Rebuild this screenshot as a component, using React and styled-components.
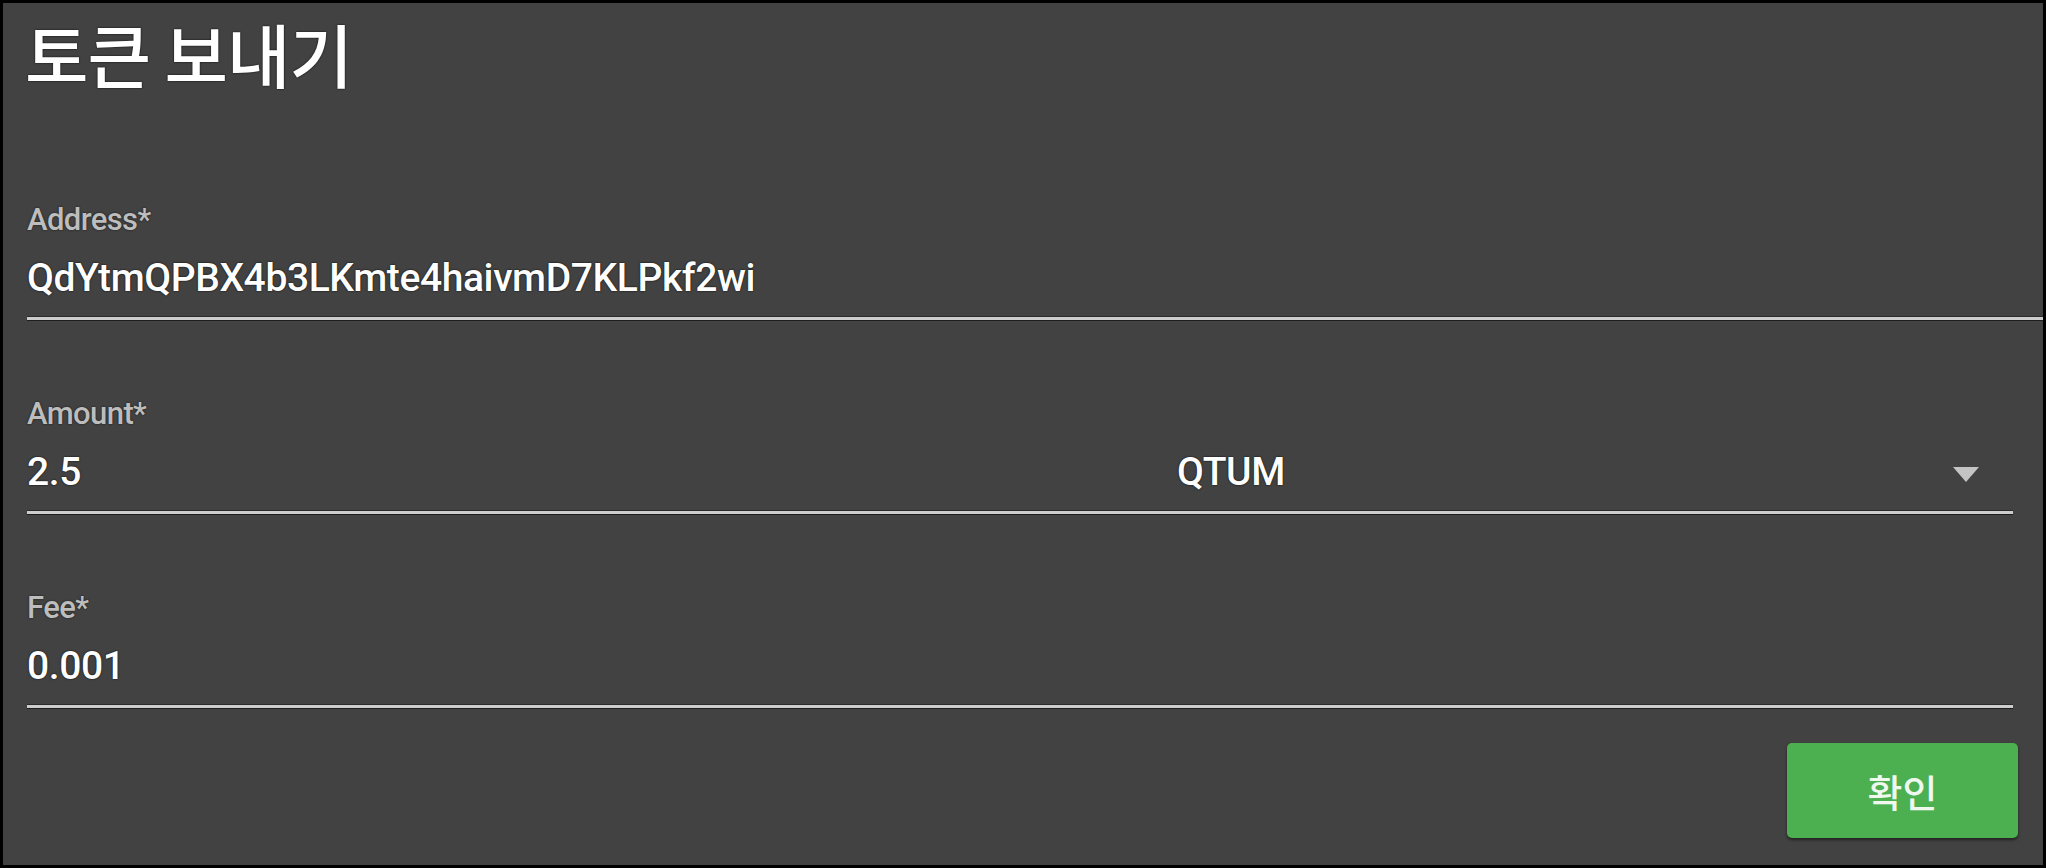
import React from 'react';
import styled, { createGlobalStyle } from 'styled-components';

const GlobalStyle = createGlobalStyle`
  html, body { margin: 0; padding: 0; background: #000; }
  * { box-sizing: border-box; }
`;

const Panel = styled.div`
  width: 2046px;
  height: 868px;
  border: 3px solid #000;
  background: #424242;
  padding: 10px 0 0 24px;
  display: flex;
  flex-direction: column;
  font-family: Roboto, "Noto Sans CJK KR", sans-serif;
  color: #fff;
`;

const Title = styled.h1`
  margin: 0 0 108px -2px;
  font-family: "Noto Sans CJK KR", sans-serif;
  font-weight: 500;
  font-size: 69px;
  line-height: 81px;
  letter-spacing: -1px;
  color: #fff;
  text-shadow: 0 0 2px #000;
`;

const Form = styled.div`
  display: flex;
  flex-direction: column;
  gap: 76px;
`;

const Row = styled.div`
  display: flex;
  align-items: flex-end;
  margin-right: ${p => (p.$full ? 0 : 30)}px;
`;

const Field = styled.div`
  display: flex;
  flex-direction: column;
  flex: ${p => (p.$width ? `0 0 ${p.$width}px` : '1 1 auto')};
  border-bottom: 3px solid #cdcdcd;
  box-shadow: 0 1px 0 #1e1e1e, 0 -1px 0 #2a2a2a inset;
`;

const Label = styled.div`
  font-size: 31px;
  font-weight: 500;
  letter-spacing: -0.6px;
  line-height: 36px;
  color: #bdbdbd;
  margin-bottom: 17px;
  text-shadow: 0 0 2px #111;
`;

const Value = styled.div`
  display: flex;
  align-items: center;
  justify-content: space-between;
  font-size: 39px;
  font-weight: 500;
  letter-spacing: -0.4px;
  line-height: 46px;
  color: #fff;
  padding-bottom: 16px;
  text-shadow: 0 0 2px #000;
`;

const Arrow = styled.span`
  width: 0;
  height: 0;
  margin-right: 34px;
  margin-top: 4px;
  border-left: 13px solid transparent;
  border-right: 13px solid transparent;
  border-top: 15px solid #c4c4c4;
`;

const Actions = styled.div`
  display: flex;
  justify-content: flex-end;
  margin: 35px 25px 0 0;
`;

const Button = styled.button`
  width: 231px;
  height: 95px;
  border: none;
  border-radius: 5px;
  background: #4caf50;
  color: #eef8ee;
  font-family: "Noto Sans CJK KR", sans-serif;
  font-size: 38px;
  font-weight: 500;
  box-shadow: 0 2px 3px rgba(0, 0, 0, 0.5);
  cursor: pointer;
`;

export default function App() {
  return (
    <>
      <GlobalStyle />
      <Panel>
        <Title>토큰 보내기</Title>
        <Form>
          <Row $full>
            <Field>
              <Label>Address*</Label>
              <Value>QdYtmQPBX4b3LKmte4haivmD7KLPkf2wi</Value>
            </Field>
          </Row>
          <Row>
            <Field>
              <Label>Amount*</Label>
              <Value>2.5</Value>
            </Field>
            <Field $width={836}>
              <Value>
                QTUM
                <Arrow />
              </Value>
            </Field>
          </Row>
          <Row>
            <Field>
              <Label>Fee*</Label>
              <Value>0.001</Value>
            </Field>
          </Row>
        </Form>
        <Actions>
          <Button>확인</Button>
        </Actions>
      </Panel>
    </>
  );
}
